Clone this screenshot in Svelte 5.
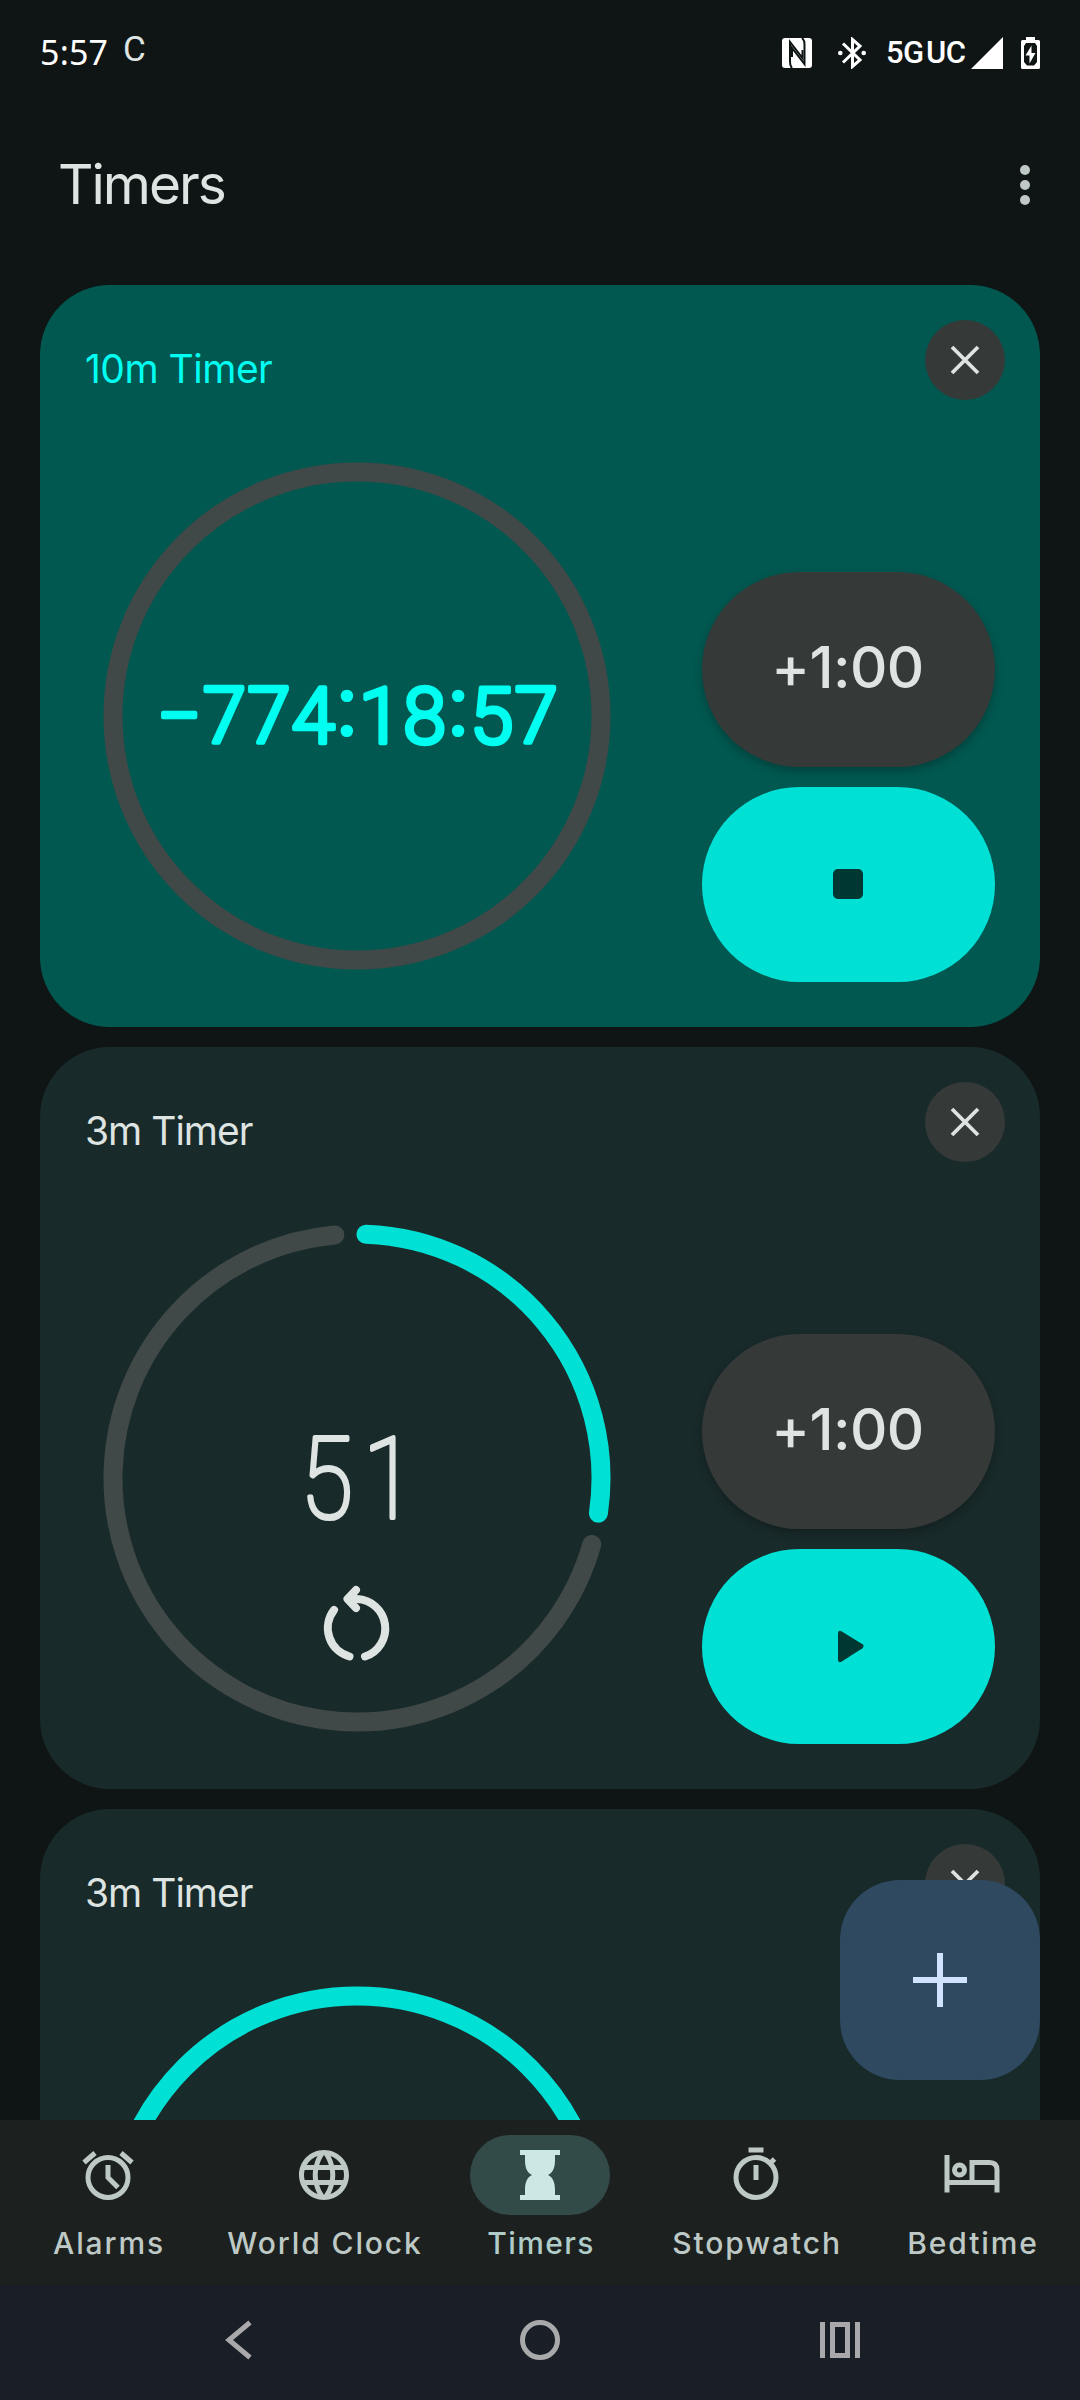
<script>
  const R = 244;
  const CX = 254;

  let timers = [
    { id: 1, label: '10m Timer', display: '−774:18:57', state: 'expired' },
    { id: 2, label: '3m Timer', display: '51', state: 'paused' },
    { id: 3, label: '3m Timer', display: '', state: 'full' }
  ];

  const tabs = ['Alarms', 'World Clock', 'Timers', 'Stopwatch', 'Bedtime'];
  let active = 'Timers';

  // angles in degrees, clockwise from 12 o'clock
  function arc(from, to) {
    const point = (deg) => {
      const a = (deg * Math.PI) / 180;
      return `${(CX + R * Math.sin(a)).toFixed(2)} ${(CX - R * Math.cos(a)).toFixed(2)}`;
    };
    const large = to - from > 180 ? 1 : 0;
    return `M${point(from)}A${R} ${R} 0 ${large} 1 ${point(to)}`;
  }

  // colons sit a little higher than the font puts them
  function lift(text, i) {
    if (text[i] === ':') return -9;
    return text[i - 1] === ':' ? 9 : 0;
  }

  function removeTimer(id) {
    timers = timers.filter((t) => t.id !== id);
  }
</script>

<div class="screen">
  <div class="status">
    <span class="time">5:57</span>
    <span class="carrier">C</span>
    <svg class="nfc" viewBox="0 0 30 30" width="30" height="30">
      <rect width="30" height="30" rx="3" fill="#fff" />
      <path d="M10 30Q8 28 8 24V4L20.500 20V12" fill="none" stroke="#0f1514" stroke-width="2" />
      <path d="M20 0Q22.500 2 22.500 6V26L10 10V19" fill="none" stroke="#0f1514" stroke-width="2" />
    </svg>
    <svg class="bt" viewBox="0 0 28 32" width="28" height="32">
      <path d="M5 6.500L22 23L14.500 29.500V2.500L22 9L5 25.500" fill="none" stroke="#fff" stroke-width="3" />
      <circle cx="2.300" cy="16" r="2.300" fill="#fff" />
      <circle cx="25.700" cy="16" r="2.300" fill="#fff" />
    </svg>
    <span class="network">5G UC</span>
    <svg class="signal" viewBox="0 0 32 32" width="32" height="32">
      <path d="M0 32L32 0V32Z" fill="#fff" />
    </svg>
    <svg class="battery" viewBox="0 0 19 32" width="19" height="32">
      <path d="M5 0H14V3H17.500Q19 3 19 4.500V30.500Q19 32 17.500 32H1.500Q0 32 0 30.500V4.500Q0 3 1.500 3H5Z" fill="#fff" />
      <path d="M5 6H14L16 9V25L13 28.500H6L3 25V9Z" fill="#0f1514" />
      <path d="M10.500 8.500L4.500 18.500H8.500V26.500L14.500 16H10.500Z" fill="#fff" />
    </svg>
  </div>

  <header>
    <h1>Timers</h1>
    <button class="more" aria-label="More options">
      <svg viewBox="0 0 10 40" width="10" height="40" fill="#bec9c6">
        <circle cx="5" cy="5" r="5" />
        <circle cx="5" cy="20" r="5" />
        <circle cx="5" cy="35" r="5" />
      </svg>
    </button>
  </header>

  <main>
    {#each timers as timer (timer.id)}
      <section class="card" class:expired={timer.state === 'expired'}>
        <h2>{timer.label}</h2>
        <button class="close" aria-label="Remove timer" on:click={() => removeTimer(timer.id)}>
          <svg viewBox="0 0 30 30" width="30" height="30">
            <path d="M2 2L28 28M28 2L2 28" stroke="#dee4e2" stroke-width="3.800" />
          </svg>
        </button>

        <div class="body">
          <svg class="ring" viewBox="0 0 508 508" width="508" height="508">
            {#if timer.state === 'expired'}
              <circle class="track" cx={CX} cy={CX} r={R} />
              <text class="digits long" x="255" y="281">{#each timer.display as ch, i}<tspan class:colon={ch === ':'} dx={ch === ':' ? 2.5 : 0} dy={lift(timer.display, i)}>{ch}</tspan>{/each}</text>
            {:else if timer.state === 'paused'}
              <path class="track" d={arc(105.8, 354.8)} />
              <path class="progress" d={arc(2.1, 98.3)} />
              <text class="digits short" transform="translate(260 294) scale(.84 1)">{timer.display}</text>
              <g class="reset">
                <path d="M231 386A29.500 29.500 0 0 0 246.500 432.500" />
                <path d="M262 432.500A29.500 29.500 0 0 0 254 375H246" />
                <path class="solid" d="M253 366L244.500 375L253 384" />
              </g>
            {:else}
              <circle class="progress" cx={CX} cy={CX} r={R} />
            {/if}
          </svg>

          {#if timer.state !== 'full'}
            <div class="actions">
              <button class="add">+1:00</button>
              <button class="main" aria-label={timer.state === 'expired' ? 'Stop' : 'Start'}>
                <svg viewBox="0 0 60 60" width="60" height="60" fill="#003733">
                  {#if timer.state === 'expired'}
                    <rect x="14" y="14" width="30" height="30" rx="5" />
                  {:else}
                    <path d="M19 16.500Q19 12.500 22.800 14.500L43.500 27.300Q45.500 29.300 43.500 31.300L22.800 44.500Q19 46.500 19 42.500Z" />
                  {/if}
                </svg>
              </button>
            </div>
          {/if}
        </div>
      </section>
    {/each}

    <button class="fab" aria-label="Add timer">
      <svg viewBox="0 0 54 54" width="54" height="54">
        <path d="M0 27H54M27 0V54" stroke="#d1e4ff" stroke-width="6" />
      </svg>
    </button>
  </main>

  <nav>
    {#each tabs as tab}
      <button class="tab" class:active={tab === active} on:click={() => (active = tab)}>
        <span class="pill">
          <svg viewBox="0 0 24 24" width="60" height="60" fill="currentColor">
            {#if tab === 'Alarms'}
              <path d="M2.400 7L6.800 3.200M21.600 7L17.200 3.200M12 8V13L16 17" fill="none" stroke="currentColor" stroke-width="2" />
              <circle cx="12" cy="13" r="8" fill="none" stroke="currentColor" stroke-width="2" />
            {:else if tab === 'World Clock'}
              <path d="M11.990 2C6.470 2 2 6.480 2 12s4.470 10 9.990 10C17.520 22 22 17.520 22 12S17.520 2 11.990 2zm6.930 6h-2.950c-.32-1.250-.78-2.450-1.380-3.560 1.840.63 3.370 1.910 4.330 3.560zM12 4.040c.83 1.200 1.480 2.530 1.910 3.960h-3.820c.43-1.430 1.080-2.760 1.910-3.960zM4.260 14C4.100 13.360 4 12.690 4 12s.1-1.360.26-2h3.380c-.08.66-.14 1.320-.14 2s.06 1.340.14 2H4.260zm.82 2h2.950c.32 1.250.78 2.450 1.380 3.560-1.840-.63-3.370-1.900-4.330-3.560zm2.950-8H5.080c.96-1.660 2.490-2.930 4.330-3.560C8.810 5.550 8.350 6.750 8.030 8zM12 19.960c-.83-1.200-1.480-2.530-1.910-3.960h3.820c-.43 1.430-1.080 2.760-1.910 3.960zM14.340 14H9.660c-.09-.66-.16-1.320-.16-2s.07-1.350.16-2h4.680c.09.65.16 1.320.16 2s-.07 1.340-.16 2zm.25 5.560c.6-1.110 1.060-2.310 1.380-3.560h2.950c-.96 1.650-2.490 2.930-4.330 3.560zM16.360 14c.08-.66.14-1.320.14-2s-.06-1.340-.14-2h3.380c.16.64.26 1.310.26 2s-.1 1.360-.26 2h-3.380z" />
            {:else if tab === 'Timers'}
              <path d="M4 2H20V4H18V6C18 9 17.200 11 15.200 12C17.200 13 18 15 18 18V20H20V22H4V20H6V18C6 15 6.800 13 8.800 12C6.800 11 6 9 6 6V4H4Z" />
            {:else if tab === 'Stopwatch'}
              <path d="M9 1H15V3H9ZM11 8H13V14H11Z" />
              <circle cx="12" cy="13" r="8" fill="none" stroke="currentColor" stroke-width="2" />
              <path d="M17.200 7.800L19.400 5.600" fill="none" stroke="currentColor" stroke-width="2" />
            {:else}
              <path d="M2 4V19M22 19V10Q22 7 19 7H12V15M2 15H22" fill="none" stroke="currentColor" stroke-width="2" />
              <circle cx="7" cy="10" r="2" fill="none" stroke="currentColor" stroke-width="2" />
            {/if}
          </svg>
        </span>
        <span class="tab-label">{tab}</span>
      </button>
    {/each}
  </nav>

  <div class="system">
    <svg viewBox="0 0 60 60" width="60" height="60">
      <path d="M40 12.500L19 30L40 47.500" />
    </svg>
    <svg viewBox="0 0 60 60" width="60" height="60">
      <circle cx="30" cy="30" r="17.500" />
    </svg>
    <svg viewBox="0 0 60 60" width="60" height="60">
      <path d="M12.500 12V48M47.500 12V48M22.500 14.500H37.500V45.500H22.500Z" />
    </svg>
  </div>
</div>

<style>
  :global(body) {
    background: #0f1514;
  }

  .screen {
    width: 1080px;
    height: 2400px;
    display: flex;
    flex-direction: column;
    overflow: hidden;
    background: #0f1514;
    color: #dee4e2;
    font-family: Inter, Roboto, sans-serif;
  }

  button {
    border: none;
    padding: 0;
    margin: 0;
    background: none;
    color: inherit;
    font-family: inherit;
    display: flex;
    align-items: center;
    justify-content: center;
    cursor: pointer;
  }

  svg {
    display: block;
    flex: none;
  }

  .status {
    display: flex;
    align-items: center;
    height: 105px;
    padding: 0 40px;
    box-sizing: border-box;
    color: #fff;
  }

  .time {
    width: 83px;
    margin-bottom: 2px;
    font-family: 'Noto Sans', sans-serif;
    font-size: 34px;
    letter-spacing: 0.200px;
  }

  .carrier {
    font-family: Roboto, sans-serif;
    font-size: 35px;
    margin-bottom: 7px;
    margin-right: auto;
    color: #dee4e2;
  }

  .bt {
    margin-left: 26px;
  }

  .network {
    margin-left: 20px;
    font-family: Roboto, sans-serif;
    font-weight: 500;
    font-size: 31px;
    width: 85px;
    white-space: nowrap;
    letter-spacing: -0.500px;
    word-spacing: -5px;
  }

  .battery {
    margin-left: 18px;
  }

  header {
    display: flex;
    align-items: center;
    justify-content: space-between;
    height: 160px;
    padding: 0 50px 0 58px;
    margin-bottom: 20px;
  }

  h1 {
    margin: 0 0 2px;
    font-size: 55px;
    font-weight: 400;
    letter-spacing: -2px;
  }

  main {
    position: relative;
    flex: 1;
    min-height: 0;
    overflow: hidden;
    padding: 0 40px;
    display: flex;
    flex-direction: column;
    gap: 20px;
  }

  .card {
    position: relative;
    flex: none;
    height: 742px;
    box-sizing: border-box;
    padding: 60px 45px 45px;
    border-radius: 70px;
    background: #192a2a;
  }

  .card.expired {
    background: #005850;
  }

  h2 {
    margin: 0;
    font-size: 39px;
    font-weight: 400;
    line-height: 48px;
    letter-spacing: -1px;
  }

  .card.expired h2 {
    color: #00fff0;
    letter-spacing: -0.500px;
  }

  .close {
    position: absolute;
    top: 35px;
    right: 35px;
    width: 80px;
    height: 80px;
    border-radius: 50%;
    background: #353a39;
  }

  .body {
    display: flex;
    align-items: flex-end;
    justify-content: space-between;
    height: 589px;
  }

  .ring {
    margin: 0 0 12.500px 17.500px;
  }

  .track,
  .progress {
    fill: none;
    stroke-width: 19;
    stroke-linecap: round;
  }

  .track {
    stroke: #404947;
  }

  .progress {
    stroke: #00e0d5;
  }

  .digits {
    font-family: Roboto, sans-serif;
    text-anchor: middle;
    stroke-linejoin: round;
  }

  .digits.long {
    font-size: 78px;
    font-weight: 300;
    letter-spacing: 1.200px;
    fill: #00fff0;
    stroke: #00fff0;
    stroke-width: 4.500;
  }

  .colon {
    letter-spacing: 3.500px;
    stroke-width: 6;
  }

  .digits.short {
    font-size: 114px;
    font-weight: 100;
    letter-spacing: 12px;
    fill: #dee4e2;
    stroke: #dee4e2;
    stroke-width: 4.200;
  }

  .reset {
    fill: none;
    stroke: #dee4e2;
    stroke-width: 8;
    stroke-linecap: round;
    stroke-linejoin: round;
  }

  .solid {
    fill: #dee4e2;
  }

  .actions {
    display: flex;
    flex-direction: column;
    gap: 20px;
  }

  .actions button {
    width: 293px;
    height: 195px;
    border-radius: 98px;
  }

  .actions .add {
    box-sizing: border-box;
    padding: 0 2px 6px 0;
    background: #353a39;
    color: #dee4e2;
    font-size: 58px;
    font-weight: 500;
    letter-spacing: -0.600px;
    box-shadow: 0 4px 8px rgba(0, 0, 0, 0.25);
  }

  .main {
    background: #00e0d5;
  }

  .fab {
    position: absolute;
    right: 40px;
    bottom: 40px;
    width: 200px;
    height: 200px;
    border-radius: 60px;
    background: #2f4961;
  }

  nav {
    display: grid;
    grid-template-columns: repeat(5, 1fr);
    height: 165px;
    background: #1c2120;
    color: #bec9c6;
  }

  .tab {
    flex-direction: column;
    justify-content: flex-start;
    padding-top: 15px;
    gap: 10px;
  }

  .pill {
    display: flex;
    align-items: center;
    justify-content: center;
    width: 140px;
    height: 80px;
    border-radius: 40px;
  }

  .active .pill {
    background: #334b48;
    color: #cce8e4;
  }

  .tab-label {
    font-size: 30px;
    font-weight: 500;
    line-height: 36px;
    letter-spacing: 1.900px;
    margin-right: -2px;
    white-space: nowrap;
  }

  .active .tab-label {
    color: #b0ccc8;
    letter-spacing: 1.400px;
  }

  .system {
    display: flex;
    align-items: center;
    justify-content: center;
    gap: 240px;
    height: 115px;
    box-sizing: border-box;
    padding-bottom: 5px;
    background: #1a1e26;
  }

  .system svg {
    fill: none;
    stroke: #a9a9ab;
    stroke-width: 5;
  }
</style>
